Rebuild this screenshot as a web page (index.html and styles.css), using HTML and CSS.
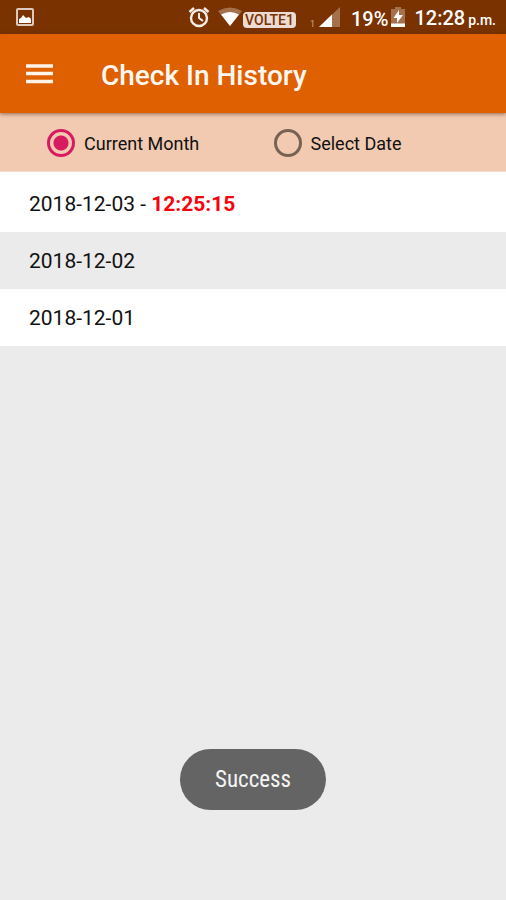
FILE: index.html
```html
<!DOCTYPE html>
<html lang="en">
<head>
<meta charset="utf-8">
<meta name="viewport" content="width=device-width, initial-scale=1">
<title>Check In History</title>
<link rel="stylesheet" href="styles.css">
</head>
<body>
<div class="status">
  <svg class="picture" width="18" height="18" viewBox="0 0 18 18" aria-hidden="true">
    <rect x="1" y="1" width="16" height="16" rx="1" fill="none" stroke="#ddc9bd" stroke-width="2"/>
    <path d="M3 15v-4l2-1 2-3 3 3 3-1 2 2v4z" fill="#fff"/>
  </svg>
  <svg class="alarm" width="22" height="22" viewBox="0 0 22 22" fill="none" stroke="#f7eee9" aria-hidden="true">
    <circle cx="11" cy="12" r="8" stroke-width="2.4"/>
    <path d="M1.500 6 6 2M20.500 6 16 2" stroke-width="2.400"/>
    <path d="M11 7v5l4 3" stroke-width="2"/>
  </svg>
  <svg class="wifi" width="24" height="20" viewBox="0 0 24 20" aria-hidden="true">
    <path d="M0 4Q12-3 24 4L12 19z" fill="#a5714d"/>
    <path d="M3 7.500Q12 2.500 21 7.500L12 19z" fill="#fff"/>
  </svg>
  <span class="volte">VOLTE1</span>
  <span class="sim">1</span>
  <svg class="signal" width="22" height="20" viewBox="0 0 22 20" aria-hidden="true">
    <path d="M0 20 21 0v20z" fill="#a5714d"/>
    <path d="M0 20 13 7.600V20z" fill="#fff"/>
  </svg>
  <span class="percent">19%</span>
  <svg class="battery" width="14" height="20" viewBox="0 0 14 20" aria-hidden="true">
    <path d="M4 0h6v2h4v18H0V2h4z" fill="#a5714d"/>
    <path d="M0 16.500h14V20H0z" fill="#fff"/>
    <path d="M8 3 2.500 11H6v5l6-8H8z" fill="#fff"/>
  </svg>
  <span class="time">12:28 <small>p.m.</small></span>
</div>
<header class="appbar">
  <button class="menu" type="button" aria-label="Menu">
    <svg width="28" height="20" viewBox="0 0 28 20" aria-hidden="true">
      <path d="M0 2h27M0 9.500h27M0 17.500h27" stroke="#fff3ea" stroke-width="3.400"/>
    </svg>
  </button>
  <h1>Check In History</h1>
</header>
<main>
  <form class="filter">
    <label><input type="radio" name="range" checked>Current Month</label>
    <label><input type="radio" name="range">Select Date</label>
  </form>
  <ul class="history">
    <li>2018-12-03 - <strong>12:25:15</strong></li>
    <li>2018-12-02</li>
    <li>2018-12-01</li>
  </ul>
</main>
<div class="toast" role="status">Success</div>
</body>
</html>
```

FILE: styles.css
```css
* {
  box-sizing: border-box;
}

body {
  margin: 0;
  min-height: 100vh;
  background: #ebebeb;
  color: #111;
  font-family: Roboto, "Liberation Sans", sans-serif;
}

svg {
  display: block;
  flex: none;
}

.status {
  display: flex;
  align-items: center;
  height: 34px;
  padding: 0 10px 0 16px;
  background: #793200;
  color: #fff;
  white-space: nowrap;
}

.alarm {
  margin-left: auto;
  margin-right: 8px;
}

.volte {
  padding: 0 2px;
  margin: 5px 0 0 1px;
  border-radius: 4px;
  background: #ecdcd3;
  color: #793200;
  font-size: 14px;
  font-weight: 500;
  line-height: 16px;
}

.sim {
  margin: 14px 4px 0 14px;
  color: #c9a78f;
  font-size: 9px;
  line-height: 8px;
}

.percent {
  margin: 3px 3px 0 10px;
  font-size: 20px;
  font-weight: 500;
  line-height: 24px;
}

.time {
  margin: 3px 0 0 9px;
  font-size: 20px;
  font-weight: 500;
  line-height: 24px;
}

.time small {
  margin-left: -2px;
  font-size: 14px;
}

.appbar {
  position: relative;
  display: flex;
  align-items: center;
  gap: 41px;
  height: 79px;
  padding: 0 20px;
  background: #df6000;
  box-shadow: 0 1px 4px rgba(80, 40, 10, 0.6);
}

.menu {
  padding: 6px;
  border: 0;
  background: none;
}

h1 {
  margin: 4px 0 0;
  color: #fff8f2;
  font-size: 28px;
  font-weight: 500;
  line-height: 36px;
}

.filter {
  display: grid;
  grid-template-columns: 1fr 1fr;
  height: 59px;
  padding: 2px 6px 0 47px;
  background: #f1cab1;
  border-bottom: 1px solid #f5dccd;
}

.filter label {
  display: flex;
  align-items: center;
  gap: 9px;
  font-size: 18px;
}

.filter input {
  appearance: none;
  width: 28px;
  height: 28px;
  margin: 0;
  border: 3px solid #776253;
  border-radius: 50%;
}

.filter input:checked {
  border-color: #d81b60;
  background: radial-gradient(circle, #d81b60 7px, transparent 8px);
}

.history {
  margin: 0;
  padding: 3px 0 0;
  background: #fff;
  list-style: none;
}

.history li {
  height: 57px;
  padding: 0 29px;
  font-size: 21px;
  line-height: 59px;
}

.history li:nth-child(even) {
  background: #ebebeb;
}

.history strong {
  color: #f5040b;
}

.toast {
  position: fixed;
  bottom: 90px;
  left: 50%;
  transform: translateX(-50%);
  padding: 1px 35px 0;
  border-radius: 31px;
  background: #646464;
  color: #f5f5f5;
  font-family: "Roboto Condensed", Roboto, sans-serif;
  font-size: 23px;
  line-height: 60px;
}
```
